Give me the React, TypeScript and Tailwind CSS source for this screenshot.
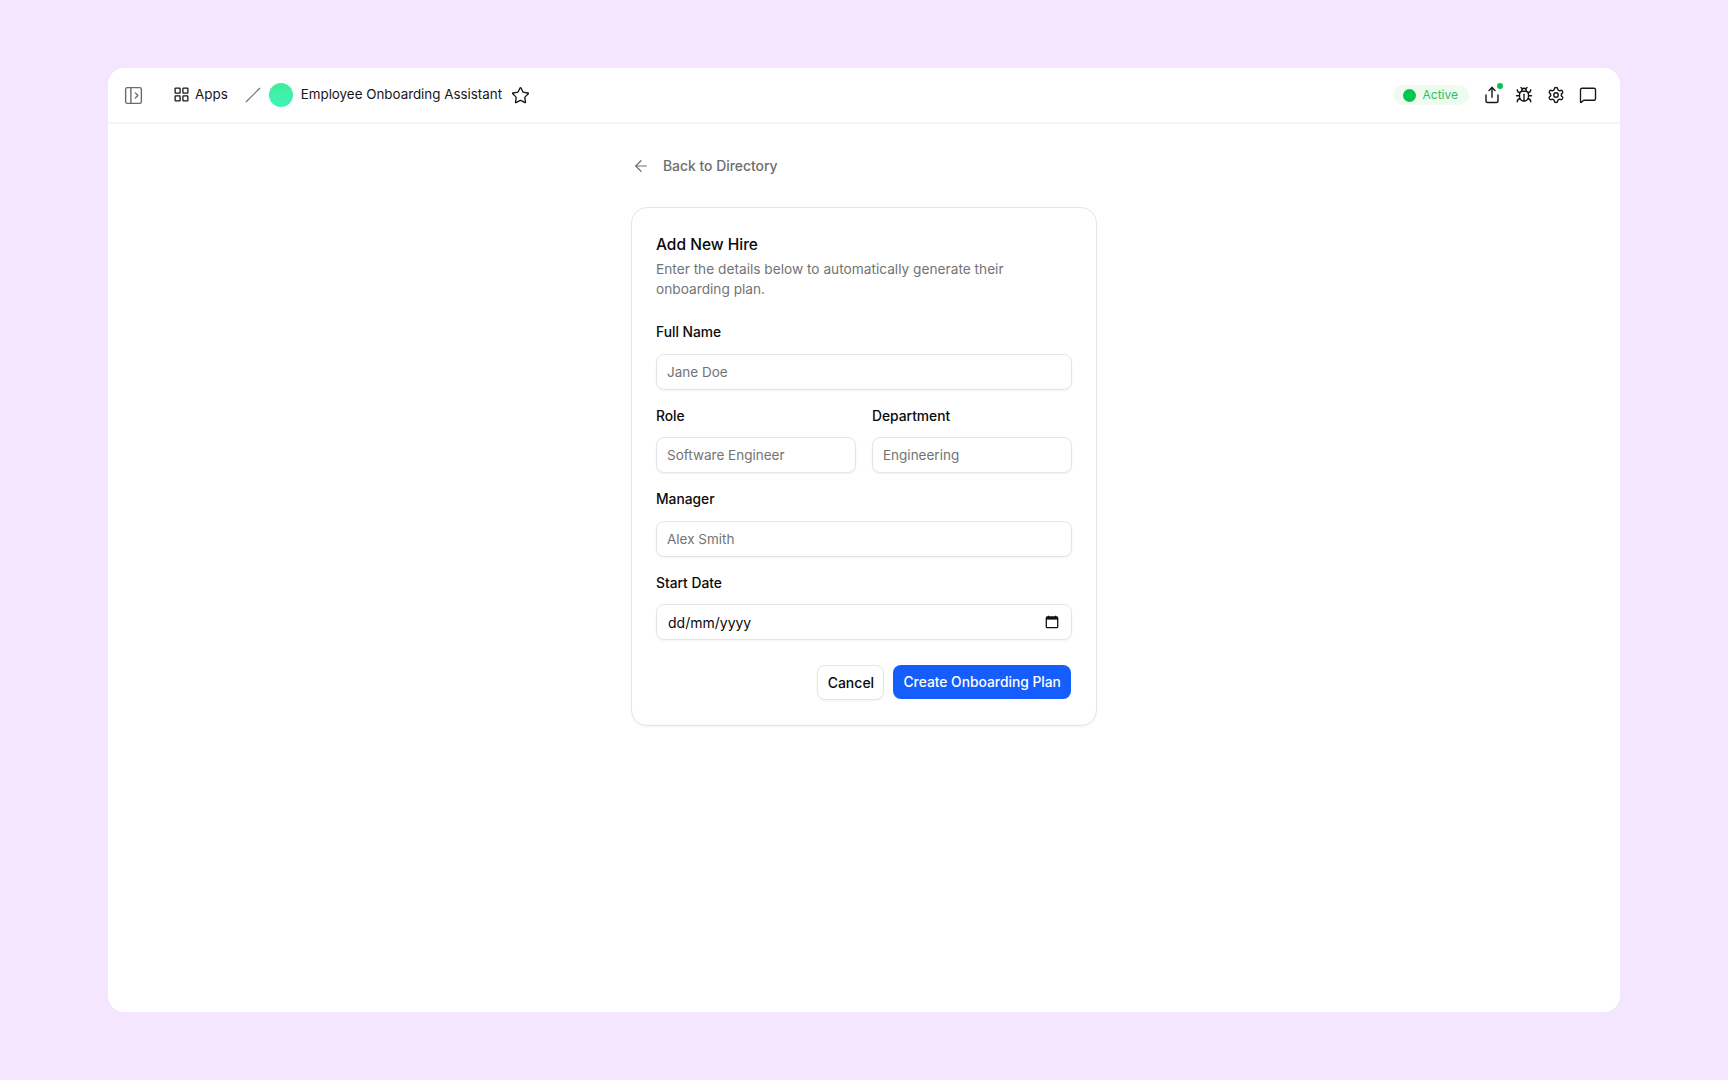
import { ArrowLeft, Bug, LayoutGrid, MessageSquare, PanelLeftOpen, Settings, Share, Star } from 'lucide-react'

function Field({ label, placeholder }: { label: string; placeholder: string }) {
  return (
    <div className="flex min-w-0 flex-col gap-[11.5px]">
      <label className="text-[13.8px] font-medium leading-5 text-[#0a0a0a]">{label}</label>
      <input
        placeholder={placeholder}
        className="h-[36px] w-full rounded-lg border border-[#e5e5e5] bg-white px-[10px] text-[13.5px] text-[#0a0a0a] shadow-xs outline-none placeholder:text-[#737373]"
      />
    </div>
  )
}

export default function App() {
  return (
    <div className="flex h-[1080px] bg-[#f4e6ff] px-[108px] pt-[68px] pb-[68px] font-['Inter',sans-serif]">
      <div className="flex w-full flex-col overflow-hidden rounded-2xl bg-white">
        {/* Top bar */}
        <header className="flex h-[56px] shrink-0 items-center justify-between border-b-2 border-[#f5f5f5] pr-[23px] pl-[15px]">
          <div className="flex items-center">
            <PanelLeftOpen size={21} strokeWidth={1.6} className="text-[#6b6b6b]" />
            <div className="ml-[29px] flex items-center gap-[5px]">
              <LayoutGrid size={17} strokeWidth={1.85} className="text-[#171717]" />
              <span className="pb-px text-[13.4px] text-[#171717]">Apps</span>
            </div>
            <svg width="16" height="16" viewBox="0 0 16 16" className="ml-[17px] text-[#737373]">
              <line x1="1" y1="15" x2="15" y2="1" stroke="currentColor" strokeWidth="1.2" />
            </svg>
            <div className="ml-[8px] h-[24px] w-[24px] rounded-full bg-gradient-to-b from-[#45eb96] to-[#3cf5bb]" />
            <span className="ml-[8px] pb-px text-[13.36px] text-[#171717]">Employee Onboarding Assistant</span>
            <Star size={19} strokeWidth={1.7} className="ml-[9px] text-[#171717]" />
          </div>
          <div className="flex items-center">
            <div className="flex h-[20px] items-center gap-[7px] rounded-full bg-[#effbf1] pr-[11px] pl-[10px]">
              <span className="h-[13px] w-[13px] rounded-full bg-[#05c44f]" />
              <span className="text-[12px] text-[#22c55e]">Active</span>
            </div>
            <div className="relative ml-[14px]">
              <Share size={18} strokeWidth={1.9} className="text-[#171717]" />
              <span className="absolute -top-[3px] -right-[2px] h-[6px] w-[6px] rounded-full bg-[#05c44f]" />
            </div>
            <Bug size={18} strokeWidth={1.8} className="ml-[14px] text-[#171717]" />
            <Settings size={18} strokeWidth={1.9} className="ml-[14px] text-[#171717]" />
            <MessageSquare size={18} strokeWidth={1.8} className="ml-[14px] text-[#171717]" />
          </div>
        </header>

        {/* Content */}
        <main className="mx-auto flex w-[466px] flex-col pt-[31.5px]">
          <div className="flex items-center gap-[13px] pl-[1px] text-[#6e6e6e]">
            <ArrowLeft size={18} strokeWidth={1.6} />
            <span className="text-[13.9px] leading-5 font-medium">Back to Directory</span>
          </div>

          <form className="mt-[31px] flex flex-col gap-[16px] rounded-2xl border border-[#e5e5e5] px-[24px] pt-[25px] pb-[24.5px] shadow-xs">
            <div className="mb-[7.3px]">
              <h2 className="text-[15.5px] leading-[24px] font-medium text-[#0a0a0a]">Add New Hire</h2>
              <p className="mt-[2.5px] text-[13.7px] leading-[20px] text-[#737373]">
                Enter the details below to automatically generate their onboarding plan.
              </p>
            </div>

            <Field label="Full Name" placeholder="Jane Doe" />
            <div className="grid grid-cols-2 gap-4">
              <Field label="Role" placeholder="Software Engineer" />
              <Field label="Department" placeholder="Engineering" />
            </div>
            <Field label="Manager" placeholder="Alex Smith" />
            <div className="flex flex-col gap-[11.5px]">
              <label className="text-[13.8px] font-medium leading-5 text-[#0a0a0a]">Start Date</label>
              <div className="flex h-[36px] items-center justify-between rounded-lg border border-[#e5e5e5] pr-[12px] pl-[11px] shadow-xs">
                <span className="text-[14px] text-[#0a0a0a]">dd/mm/yyyy</span>
                <svg width="14" height="14" viewBox="0 0 14 14" fill="none" className="text-[#111]">
                  <path d="M3.5 0.8v2M10.5 0.8v2" stroke="currentColor" strokeWidth="1.3" />
                  <rect x="1.3" y="2" width="11.4" height="10.7" rx="1" stroke="currentColor" strokeWidth="1.3" />
                  <rect x="1.3" y="2" width="11.4" height="2.6" fill="currentColor" />
                </svg>
              </div>
            </div>

            <div className="mt-[8.9px] flex justify-end gap-[9px] pr-[1px]">
              <button type="button" className="h-[35px] w-[67px] rounded-lg border border-[#e5e5e5] bg-white text-[14px] font-medium text-[#0a0a0a] shadow-xs">
                Cancel
              </button>
              <button type="button" className="h-[34px] w-[177.6px] rounded-lg bg-[#155dfc] text-[13.8px] font-medium text-white">
                Create Onboarding Plan
              </button>
            </div>
          </form>
        </main>
      </div>
    </div>
  )
}
